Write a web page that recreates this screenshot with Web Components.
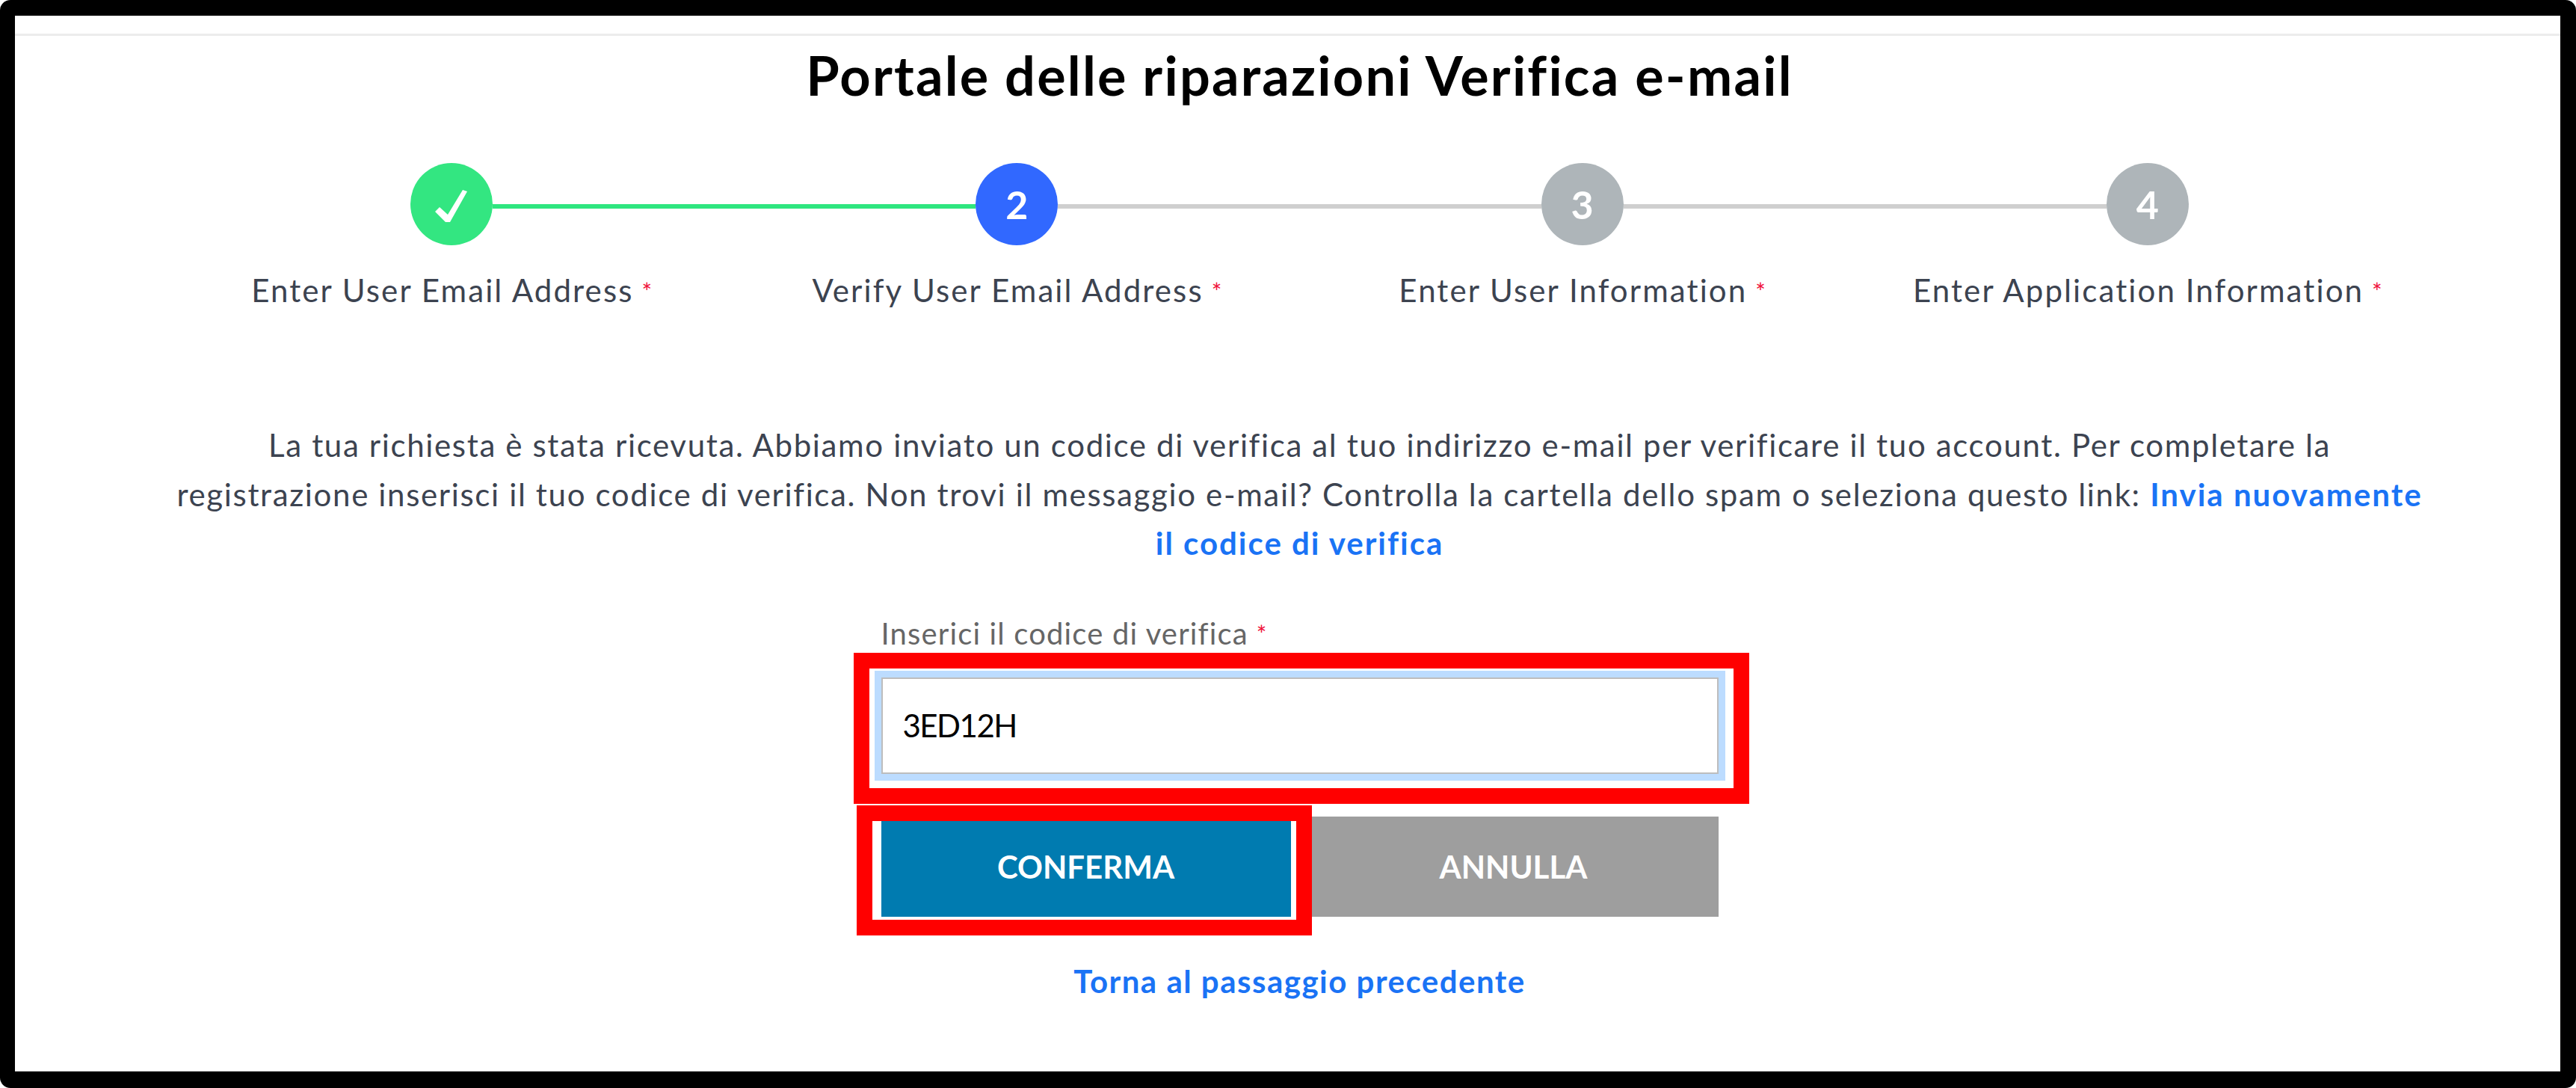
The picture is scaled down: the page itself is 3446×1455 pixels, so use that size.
<!DOCTYPE html>
<html lang="it">
<head>
<meta charset="utf-8">
<title>Portale delle riparazioni</title>
<style>
  html, body { margin: 0; background: #fff; }
  body { font-family: "Lato", "Liberation Sans", sans-serif; }
</style>
</head>
<body>
<screen-frame>
  <h1 slot="title">Portale delle riparazioni Verifica e-mail</h1>
  <wizard-steps slot="steps">
    <wizard-step state="done" label="Enter User Email Address" line-right="done"></wizard-step>
    <wizard-step state="active" num="2" label="Verify User Email Address" line-left="done" line-right="todo"></wizard-step>
    <wizard-step state="todo" num="3" label="Enter User Information" line-left="todo" line-right="todo"></wizard-step>
    <wizard-step state="todo" num="4" label="Enter Application Information" line-left="todo"></wizard-step>
  </wizard-steps>
  <verify-form slot="form"></verify-form>
</screen-frame>

<script>
class screenFrame extends HTMLElement {
    constructor() {
        super();
        this.attachShadow({ mode: 'open' });
        this.shadowRoot.innerHTML = `
        <style>
        :host { display: block; width: 3446px; height: 1455px; box-sizing: border-box; background: #000; border-radius: 14px; padding: 21px 21px 22px 20px; }
        .page { height: 100%; background: #fff; box-sizing: border-box; border-bottom: 1px solid #c8c8c8; display: flex; flex-direction: column; }
        .topbar { height: 24px; flex: none; border-bottom: 3px solid #ececec; }
        .body { padding: 0 174px 0 206px; display: flex; flex-direction: column; }
        ::slotted(h1) { margin: 16px 0 0; font: 700 72px/1 "Lato", "Liberation Sans", sans-serif; letter-spacing: 2.2px; color: #000; text-align: center; }
        </style>
        <div class="page">
            <div class="topbar"></div>
            <div class="body">
                <slot name="title"></slot>
                <slot name="steps"></slot>
                <slot name="form"></slot>
            </div>
        </div>`;
    }
}
customElements.define('screen-frame', screenFrame);

class wizardSteps extends HTMLElement {
    constructor() {
        super();
        this.attachShadow({ mode: 'open' });
        this.shadowRoot.innerHTML = `
        <style>
        :host { display: grid; grid-template-columns: repeat(4, 1fr); margin-top: 82px; }
        </style>
        <slot></slot>`;
    }
}
customElements.define('wizard-steps', wizardSteps);

class wizardStep extends HTMLElement {
    constructor() {
        super();
        this.attachShadow({ mode: 'open' });
    }
    connectedCallback() {
        const state = this.getAttribute('state');
        const left = this.getAttribute('line-left') || 'none';
        const right = this.getAttribute('line-right') || 'none';
        const check = `<svg width="110" height="110" viewBox="0 0 110 110"><path d="M33 65 L39 59 L50 69 L70 36 L76 38 L53 79 L47 79 Z" fill="#fff"/></svg>`;
        this.shadowRoot.innerHTML = `
        <style>
        :host { display: flex; flex-direction: column; align-items: stretch; }
        .head { display: flex; align-items: center; }
        .line { flex: 1; height: 6px; margin-top: 6px; }
        .line.done { background: #2ee67f; }
        .line.todo { background: #cfcfcf; }
        .dot { width: 110px; height: 110px; flex: none; border-radius: 50%; display: flex; align-items: center; justify-content: center; color: #fff; font: 700 52px/1 "Lato", sans-serif; }
        .dot.done { background: #33e681; }
        .dot.active { background: #3168ff; }
        .dot.todo { background: #aeb5b9; }
        .label { text-align: center; margin-top: 33px; font: 400 42px/54px "Lato", sans-serif; letter-spacing: 2.1px; color: #3c4350; white-space: nowrap; }
        .star { color: #f0103a; font-size: 32px; vertical-align: 2px; margin-left: 11px; letter-spacing: 0; }
        </style>
        <div class="head">
            <span class="line ${left}"></span>
            <span class="dot ${state}">${state === 'done' ? check : this.getAttribute('num')}</span>
            <span class="line ${right}"></span>
        </div>
        <div class="label">${this.getAttribute('label')}<span class="star">*</span></div>`;
    }
}
customElements.define('wizard-step', wizardStep);

class actionButton extends HTMLElement {
    constructor() {
        super();
        this.attachShadow({ mode: 'open' });
        this.shadowRoot.innerHTML = `
        <style>
        :host { display: flex; flex: 1; height: 134px; align-items: center; justify-content: center; color: #fff; font: 700 42px/1 "Lato", sans-serif; background: var(--bg, #9e9e9e); }
        </style>
        <slot></slot>`;
    }
}
customElements.define('action-button', actionButton);

class verifyForm extends HTMLElement {
    constructor() {
        super();
        this.attachShadow({ mode: 'open' });
        this.shadowRoot.innerHTML = `
        <style>
        :host { display: flex; flex-direction: column; align-items: center; }
        p { margin: 146px 0 0; width: 3012px; text-align: center; font: 400 42px/65.6px "Lato", sans-serif; letter-spacing: 1.65px; color: #3c4350; }
        p a { letter-spacing: 2px; }
        a { color: #1a73f5; text-decoration: none; font-weight: 700; }
        .form { width: 1120px; margin-top: 62px; display: flex; flex-direction: column; }
        label { font: 400 40px/50px "Lato", sans-serif; letter-spacing: 1.15px; color: #666; }
        .star { color: #f0103a; font-size: 32px; vertical-align: 2px; margin-left: 11px; letter-spacing: 0; }
        .field { position: relative; margin-top: 33px; height: 129px; box-sizing: border-box; border: 2px solid #bdbdbd; box-shadow: 0 0 0 9px #bcdcff; background: #fff; display: flex; align-items: center; padding: 0 27px; font: 400 42px/1 "Lato", sans-serif; letter-spacing: -1.5px; color: #000; }
        .mark { position: absolute; box-sizing: border-box; border: 21px solid #f00; }
        .field .mark { top: -35px; left: -39px; right: -43px; bottom: -42px; }
        .buttons { position: relative; display: flex; gap: 24px; margin-top: 57px; }
        .buttons .mark { top: -15px; left: -33px; width: 609px; height: 174px; }
        .back { align-self: center; margin-top: 61px; font-size: 42px; line-height: 50px; letter-spacing: 1.5px; }
        </style>
        <p>La tua richiesta è stata ricevuta. Abbiamo inviato un codice di verifica al tuo indirizzo e-mail per verificare il tuo account. Per completare la registrazione inserisci il tuo codice di verifica. Non trovi il messaggio e-mail? Controlla la cartella dello spam o seleziona questo link: <a href="#">Invia nuovamente il codice di verifica</a></p>
        <div class="form">
            <label>Inserici il codice di verifica<span class="star">*</span></label>
            <div class="field">3ED12H<span class="mark"></span></div>
            <div class="buttons">
                <action-button style="--bg:#007bb0">CONFERMA</action-button>
                <action-button>ANNULLA</action-button>
                <span class="mark"></span>
            </div>
            <a class="back" href="#">Torna al passaggio precedente</a>
        </div>`;
    }
}
customElements.define('verify-form', verifyForm);
</script>
</body>
</html>
